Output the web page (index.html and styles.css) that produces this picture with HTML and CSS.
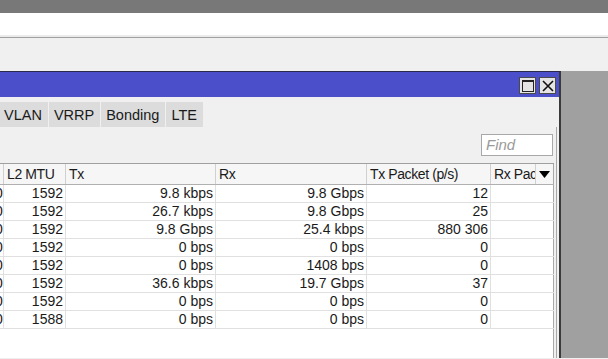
FILE: index.html
```html
<!DOCTYPE html>
<html>
<head>
<meta charset="utf-8">
<link rel="stylesheet" href="styles.css">
</head>
<body>
<div class="topbar"></div>
<div class="whitebar"></div>
<div class="toolbar"></div>
<div class="desk">
  <div class="window">
    <div class="titlebar">
      <span class="tbtn"><span class="maxicon"></span></span>
      <span class="tbtn close">
        <svg width="14" height="14" viewBox="0 0 14 14"><path d="M2 2 L12 12 M12 2 L2 12" stroke="#111" stroke-width="1.6" fill="none"/></svg>
      </span>
    </div>
    <div class="tabs">
      <span class="tab first">VLAN</span>
      <span class="tab">VRRP</span>
      <span class="tab">Bonding</span>
      <span class="tab">LTE</span>
    </div>
    <div class="panel">
      <div class="findrow"><div class="find">Find</div></div>
      <div class="table">
        <div class="row head">
          <div class="c c0"></div>
          <div class="c c1 l">L2 MTU</div>
          <div class="c c2 l">Tx</div>
          <div class="c c3 l">Rx</div>
          <div class="c c4 l">Tx Packet (p/s)</div>
          <div class="c c5 l last"><span class="clip">Rx Pac</span><span class="drop"><svg width="11" height="7" viewBox="0 0 11 7"><polygon points="0,0 11,0 5.5,7" fill="#000"/></svg></span></div>
        </div>
        <div class="row"><div class="c c0">0</div><div class="c c1">1592</div><div class="c c2">9.8 kbps</div><div class="c c3">9.8 Gbps</div><div class="c c4">12</div><div class="c c5 last"></div></div>
        <div class="row"><div class="c c0">0</div><div class="c c1">1592</div><div class="c c2">26.7 kbps</div><div class="c c3">9.8 Gbps</div><div class="c c4">25</div><div class="c c5 last"></div></div>
        <div class="row"><div class="c c0">0</div><div class="c c1">1592</div><div class="c c2">9.8 Gbps</div><div class="c c3">25.4 kbps</div><div class="c c4">880 306</div><div class="c c5 last"></div></div>
        <div class="row"><div class="c c0">0</div><div class="c c1">1592</div><div class="c c2">0 bps</div><div class="c c3">0 bps</div><div class="c c4">0</div><div class="c c5 last"></div></div>
        <div class="row"><div class="c c0">0</div><div class="c c1">1592</div><div class="c c2">0 bps</div><div class="c c3">1408 bps</div><div class="c c4">0</div><div class="c c5 last"></div></div>
        <div class="row"><div class="c c0">0</div><div class="c c1">1592</div><div class="c c2">36.6 kbps</div><div class="c c3">19.7 Gbps</div><div class="c c4">37</div><div class="c c5 last"></div></div>
        <div class="row"><div class="c c0">0</div><div class="c c1">1592</div><div class="c c2">0 bps</div><div class="c c3">0 bps</div><div class="c c4">0</div><div class="c c5 last"></div></div>
        <div class="row"><div class="c c0">0</div><div class="c c1">1588</div><div class="c c2">0 bps</div><div class="c c3">0 bps</div><div class="c c4">0</div><div class="c c5 last"></div></div>
        <div class="fill"></div>
      </div>
    </div>
  </div>
  <div class="side"></div>
</div>
</body>
</html>
```

FILE: styles.css
```css
html, body {
  margin: 0;
  padding: 0;
  width: 608px;
  height: 359px;
  overflow: hidden;
  font-family: "Liberation Sans", Arial, sans-serif;
  font-size: 14px;
  color: #1a1a1a;
  background: #f0f0f0;
}
.topbar {
  height: 13px;
  background: #787878;
}
.whitebar {
  height: 22px;
  background: #ffffff;
}
.toolbar {
  height: 34px;
  border-top: 2px solid #ebebeb;
  box-shadow: inset 0 1px 0 #a0a0a0;
  background: #f0f0f0;
}
.desk {
  display: flex;
  height: 287px;
}
.window {
  width: 559px;
  border-top: 1px solid #2a2a4a;
  border-right: 2px solid #3a3a3a;
  background: #f0f0f0;
  display: flex;
  flex-direction: column;
}
.side {
  flex: 1;
  background: #a0a0a0;
}
.titlebar {
  height: 25px;
  background: #4b4fc9;
  display: flex;
  justify-content: flex-end;
  align-items: flex-start;
  padding: 5px 3px 0 0;
  box-sizing: border-box;
  gap: 3px;
}
.tbtn {
  width: 17px;
  height: 17px;
  box-sizing: border-box;
  background: #e4e4e4;
  border: 1px solid #4a4a4a;
  display: flex;
  align-items: center;
  justify-content: center;
}
.maxicon {
  width: 12px;
  height: 12px;
  box-sizing: border-box;
  border: 1px solid #222;
  border-top-width: 2px;
}
.tabs {
  display: flex;
  margin-top: 5px;
  height: 25px;
  gap: 1px;
  font-size: 14.5px;
}
.tab {
  background: #dcdcdc;
  padding: 1px 6px 0 5px;
  line-height: 24px;
  height: 25px;
  box-sizing: border-box;
}
.tab.first {
  padding-left: 4px;
}
.panel {
  flex: 1;
  border-right: 1px solid #a8a8a8;
  margin-right: 2px;
  display: flex;
  flex-direction: column;
}
.findrow {
  display: flex;
  justify-content: flex-end;
  padding: 7px 3px 7px 0;
}
.find {
  width: 72px;
  height: 22px;
  box-sizing: border-box;
  border: 1px solid #a8a8a8;
  background: #fff;
  color: #9a9a9a;
  font-style: italic;
  padding-left: 4px;
  line-height: 20px;
  font-size: 15px;
}
.table {
  width: 554px;
  flex: 1;
  background: #fff;
  border-top: 1px solid #a0a0a0;
  display: flex;
  flex-direction: column;
}
.row {
  display: flex;
  height: 18px;
  border-bottom: 1px solid #e0e0e0;
  box-sizing: border-box;
}
.row.head {
  height: 21px;
  background: #f6f6f6;
  border-bottom: 1px solid #b0b0b0;
  letter-spacing: -0.4px;
}
.c {
  box-sizing: border-box;
  border-right: 1px solid #e0e0e0;
  text-align: right;
  padding-right: 2px;
  line-height: 17px;
  white-space: nowrap;
  overflow: hidden;
}
.head .c {
  line-height: 20px;
  border-right-color: #d0d0d0;
}
.c.l {
  text-align: left;
  padding-left: 3px;
}
.c0 { width: 4px; padding: 0; text-indent: -5px; text-align: left; }
.c1 { width: 62px; }
.c2 { width: 150px; }
.c3 { width: 151px; }
.c4 { width: 124px; }
.c5 { width: 63px; }
.c.last { border-right: 1px solid #a8a8a8; }
.head .c5 {
  display: flex;
  padding: 0;
}
.clip {
  width: 45px;
  overflow: hidden;
  padding-left: 3px;
  box-sizing: border-box;
  border-right: 1px solid #d0d0d0;
}
.drop {
  flex: 1;
  display: flex;
  align-items: center;
  justify-content: center;
}
.fill {
  flex: 1;
  border-right: 1px solid #a8a8a8;
}
```
